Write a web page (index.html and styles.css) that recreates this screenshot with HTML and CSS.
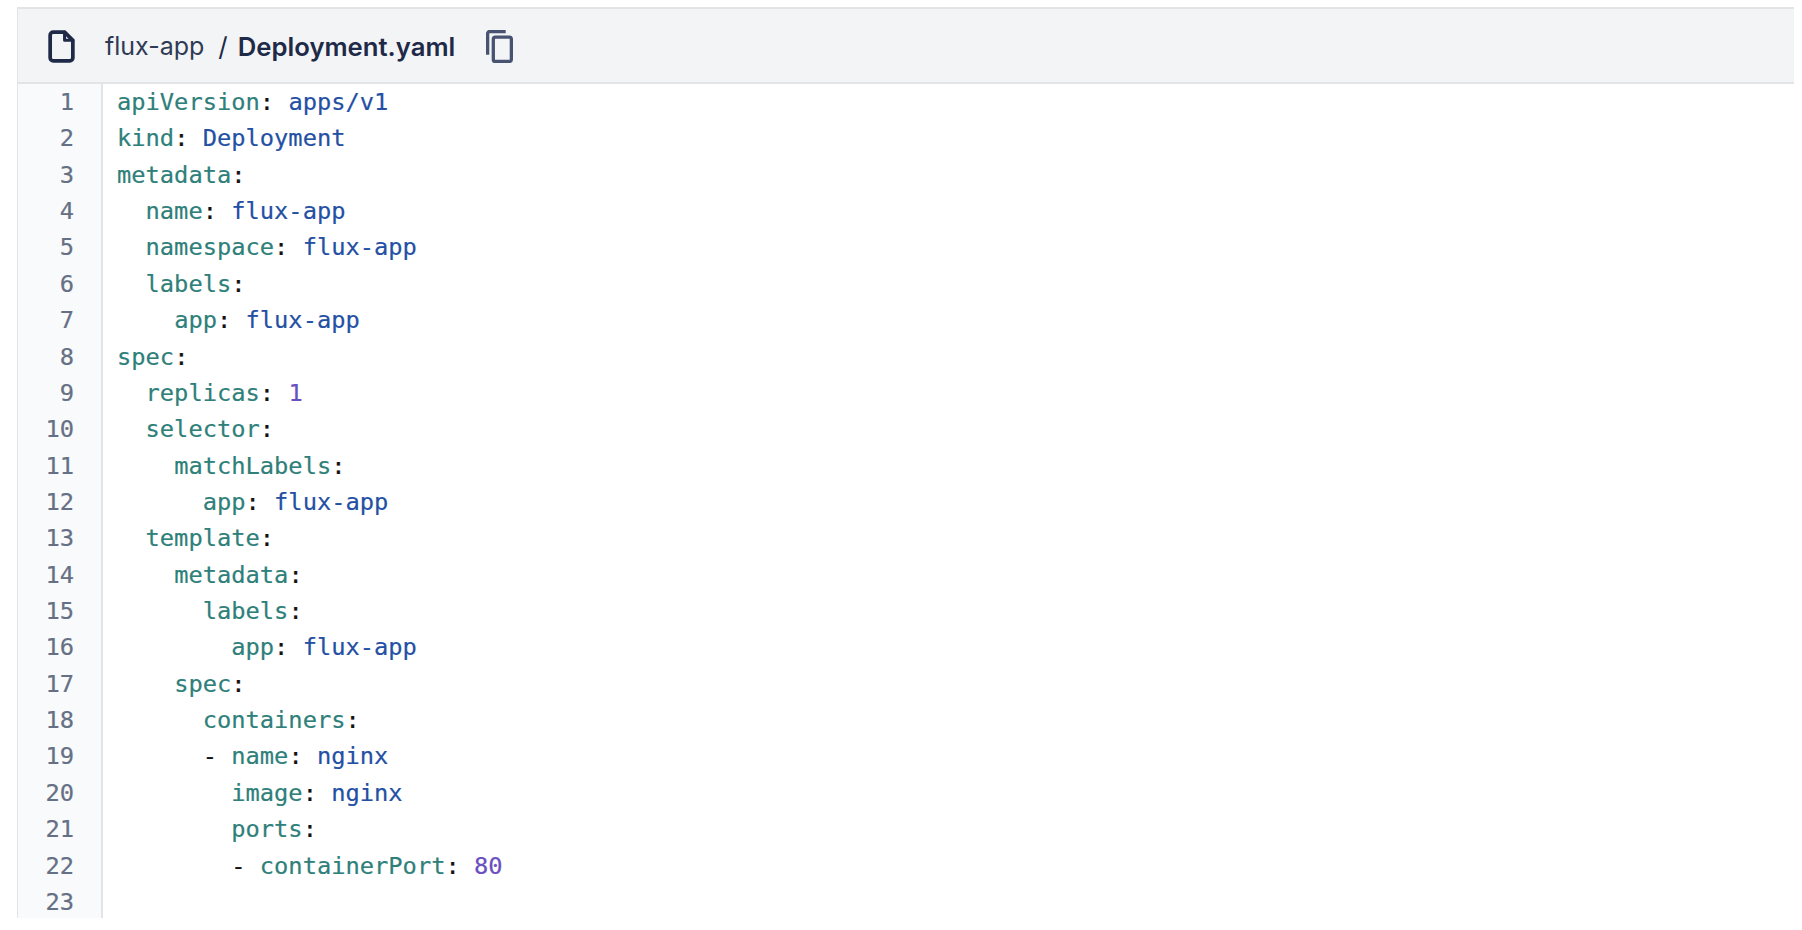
FILE: index.html
```html
<!DOCTYPE html>
<html lang="en">
<head>
<meta charset="utf-8">
<title>Deployment.yaml</title>
<link rel="stylesheet" href="styles.css">
</head>
<body>
<div class="card">
  <header class="head">
    <svg class="file-icon" viewBox="0 0 26 32" width="27" height="33" fill="none" stroke="#1e2a47" stroke-width="3.6" stroke-linejoin="round" stroke-linecap="round"><path d="M16 2H5a3 3 0 0 0-3 3v22a3 3 0 0 0 3 3h16a3 3 0 0 0 3-3V10z"/><path d="M16 2v8h8" stroke-width="3"/></svg>
    <span class="crumb">flux-app</span><span class="sep">/</span><strong class="fname">Deployment.yaml</strong>
    <svg class="copy-icon" viewBox="0 0 26 32" width="27" height="33" fill="none" stroke="#475370" stroke-width="3.2"><path d="M1.5 24V3.5a2 2 0 0 1 2-2H19"/><rect x="7" y="7" width="17.5" height="23.5" rx="2"/></svg>
  </header>
  <div class="code">
    <div class="ln"><span class="no">1</span><code class="src"><i class="k">apiVersion</i>: <i class="s">apps/v1</i></code></div>
    <div class="ln"><span class="no">2</span><code class="src"><i class="k">kind</i>: <i class="s">Deployment</i></code></div>
    <div class="ln"><span class="no">3</span><code class="src"><i class="k">metadata</i>:</code></div>
    <div class="ln"><span class="no">4</span><code class="src">  <i class="k">name</i>: <i class="s">flux-app</i></code></div>
    <div class="ln"><span class="no">5</span><code class="src">  <i class="k">namespace</i>: <i class="s">flux-app</i></code></div>
    <div class="ln"><span class="no">6</span><code class="src">  <i class="k">labels</i>:</code></div>
    <div class="ln"><span class="no">7</span><code class="src">    <i class="k">app</i>: <i class="s">flux-app</i></code></div>
    <div class="ln"><span class="no">8</span><code class="src"><i class="k">spec</i>:</code></div>
    <div class="ln"><span class="no">9</span><code class="src">  <i class="k">replicas</i>: <i class="n">1</i></code></div>
    <div class="ln"><span class="no">10</span><code class="src">  <i class="k">selector</i>:</code></div>
    <div class="ln"><span class="no">11</span><code class="src">    <i class="k">matchLabels</i>:</code></div>
    <div class="ln"><span class="no">12</span><code class="src">      <i class="k">app</i>: <i class="s">flux-app</i></code></div>
    <div class="ln"><span class="no">13</span><code class="src">  <i class="k">template</i>:</code></div>
    <div class="ln"><span class="no">14</span><code class="src">    <i class="k">metadata</i>:</code></div>
    <div class="ln"><span class="no">15</span><code class="src">      <i class="k">labels</i>:</code></div>
    <div class="ln"><span class="no">16</span><code class="src">        <i class="k">app</i>: <i class="s">flux-app</i></code></div>
    <div class="ln"><span class="no">17</span><code class="src">    <i class="k">spec</i>:</code></div>
    <div class="ln"><span class="no">18</span><code class="src">      <i class="k">containers</i>:</code></div>
    <div class="ln"><span class="no">19</span><code class="src">      - <i class="k">name</i>: <i class="s">nginx</i></code></div>
    <div class="ln"><span class="no">20</span><code class="src">        <i class="k">image</i>: <i class="s">nginx</i></code></div>
    <div class="ln"><span class="no">21</span><code class="src">        <i class="k">ports</i>:</code></div>
    <div class="ln"><span class="no">22</span><code class="src">        - <i class="k">containerPort</i>: <i class="n">80</i></code></div>
    <div class="ln"><span class="no">23</span><code class="src"></code></div>
  </div>
</div>
</body>
</html>
```
FILE: styles.css
```css
html, body { margin: 0; background: #fff; }
body { padding: 7px 8px 0 17px; height: 930px; box-sizing: border-box; overflow: hidden; }
.card { display: flex; flex-direction: column; height: 911px; overflow: hidden; }
.head {
  display: flex; align-items: center; height: 77px; flex: none;
  box-sizing: border-box;
  background: #f3f4f6;
  border: 1px solid #e2e4e8; border-width: 2px 0 2px 1px;
  font: 25px/1 Inter, "Liberation Sans", sans-serif; color: #1e2a47;
  padding: 2px 0 0 30px;
}
.file-icon { flex: none; margin: -1px 30px 0 0; }
.crumb { color: #2f3a55; }
.sep { margin: 0 10px 0 14px; font-size: 26px; }
.fname { font-weight: 600; font-size: 25.7px; }
.copy-icon { flex: none; margin: -1px 0 0 31px; }
.code { flex: 1; display: flex; flex-direction: column; background: linear-gradient(to right, #f9fafb 83px, #fff 83px); border-left: 1px solid #e2e4e8; }
.ln { display: flex; height: 36.36px; flex: none; align-items: center; font: 23.72px/36px "DejaVu Sans Mono", monospace; -webkit-text-stroke: 0.2px; }
.no { flex: none; width: 56px; padding-right: 27px; text-align: right; color: #667085; box-sizing: content-box; border-right: 2px solid #e2e4e8; height: 100%; }
.src { white-space: pre; font: inherit; color: #111; padding-left: 14px; height: 100%; }
.src i { font-style: normal; }
.k { color: #2f7f7a; }
.s { color: #2450a4; }
.n { color: #6a4fbf; }
```
